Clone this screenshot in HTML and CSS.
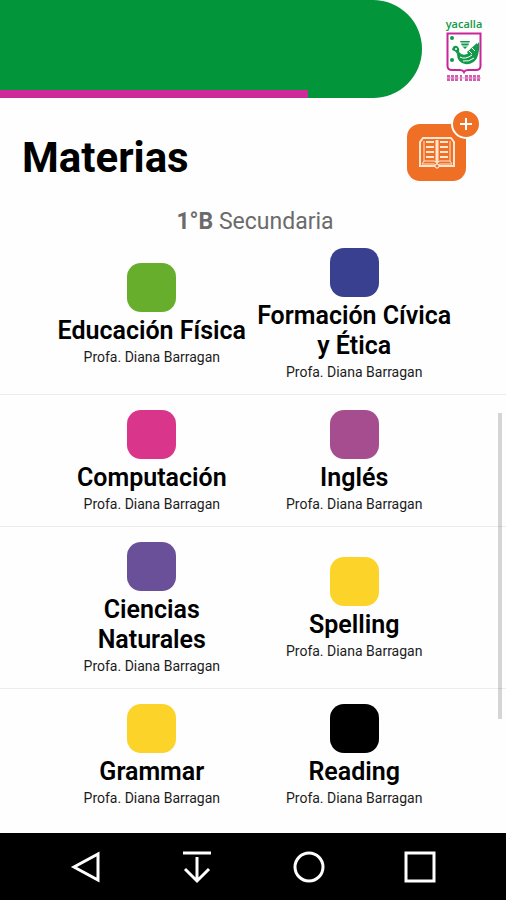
FILE: index.html
```
<!DOCTYPE html>
<html lang="es">
<head>
  <meta charset="UTF-8">
  <meta name="viewport" content="width=device-width, initial-scale=1.0">
  <title>Materias</title>
  <link rel="stylesheet" href="styles.css">
</head>
<body>

<header class="top">
  <div class="banner">
    <div class="banner-line"></div>
  </div>
  <div class="logo">
    <svg width="46" height="72" viewBox="-4 -6 46 72" role="img" aria-label="yacalla">
      <text x="19" y="10" text-anchor="middle" class="logo-text">yacalla</text>
      <!-- shield -->
      <path d="M2.500 15.500H35.500V48Q35.500 52 31 52H23Q20 52 19 54Q18 52 15 52H7Q2.500 52 2.500 48Z" fill="#fff" stroke="#c8259b" stroke-width="2"/>
      <!-- bird and flowers -->
      <g fill="#12994a">
        <path d="M7 32Q8 27 12 28Q15 30 14 34Q17 38 22 36Q29 33 34 24Q35 32 32 40Q28 47 20 46Q12 44 12 36Q11 33 7 32Z"/>
        <path d="M15 23H25L23 28L20 31L17 28Z"/>
        <circle cx="7" cy="20" r="2"/>
        <circle cx="7" cy="42" r="2"/>
        <path d="M22 34L32 25L33 27L24 37Z"/>
      </g>
      <g fill="none" stroke="#fff">
        <path d="M15 25H25M17 28H23M15 39Q20 42 27 37M18 43Q24 44 29 40M24 33L27 36M27 30L30 33"/>
      </g>
      <circle cx="11" cy="31" r="1" fill="#fff"/>
      <!-- motto -->
      <g fill="none" stroke="#cf5cae" stroke-width="6">
        <path d="M2 60H13" stroke-dasharray="3 1"/>
        <path d="M15 60H17"/>
        <path d="M20 60H36" stroke-dasharray="3 1"/>
      </g>
      <path d="M2 60H36" stroke="#e6a3d3" stroke-width="1"/>
    </svg>
  </div>
</header>

<main class="content">
  <div class="title-bar">
    <h1>Materias</h1>
    <button class="add-btn" type="button" aria-label="Agregar materia">
      <svg width="36" height="32" viewBox="0 0 36 32" fill="none" stroke="#ffe6d3" aria-hidden="true">
        <path d="M4 1H32L35 5V29H20Q18 32 16 29H1V5Z" stroke-width="2"/>
        <path d="M5 4V24L3 27H15Q18 27 18 30Q18 27 21 27H33L31 24V4M5 24H15Q18 24 18 27Q18 24 21 24H31" stroke-width="1"/>
        <path d="M18 3V26" stroke-width="3"/>
        <path d="M7 5H15M7 10H15M7 15H15M7 20H15M21 5H29M21 10H29M21 15H29M21 20H29" stroke-width="2"/>
        <circle cx="18" cy="29" r="2" fill="#ef6f25"/>
      </svg>
      <span class="badge">
        <svg width="12" height="12" viewBox="0 0 12 12" stroke="#fff" stroke-width="2" aria-hidden="true">
          <path d="M6 0V12M0 6H12"/>
        </svg>
      </span>
    </button>
  </div>

  <p class="group"><strong>1°B</strong> Secundaria</p>

  <div class="list">
    <div class="row">
      <a class="subject" href="#">
        <span class="color green"></span>
        <span class="name">Educación Física</span>
        <span class="teacher">Profa. Diana Barragan</span>
      </a>
      <a class="subject" href="#">
        <span class="color blue"></span>
        <span class="name">Formación Cívica y Ética</span>
        <span class="teacher">Profa. Diana Barragan</span>
      </a>
    </div>
    <div class="row">
      <a class="subject" href="#">
        <span class="color pink"></span>
        <span class="name">Computación</span>
        <span class="teacher">Profa. Diana Barragan</span>
      </a>
      <a class="subject" href="#">
        <span class="color plum"></span>
        <span class="name">Inglés</span>
        <span class="teacher">Profa. Diana Barragan</span>
      </a>
    </div>
    <div class="row">
      <a class="subject" href="#">
        <span class="color violet"></span>
        <span class="name">Ciencias Naturales</span>
        <span class="teacher">Profa. Diana Barragan</span>
      </a>
      <a class="subject" href="#">
        <span class="color yellow"></span>
        <span class="name">Spelling</span>
        <span class="teacher">Profa. Diana Barragan</span>
      </a>
    </div>
    <div class="row">
      <a class="subject" href="#">
        <span class="color yellow"></span>
        <span class="name">Grammar</span>
        <span class="teacher">Profa. Diana Barragan</span>
      </a>
      <a class="subject" href="#">
        <span class="color black"></span>
        <span class="name">Reading</span>
        <span class="teacher">Profa. Diana Barragan</span>
      </a>
    </div>
    <div class="scrollbar"></div>
  </div>
</main>

<nav class="navbar">
  <button type="button" aria-label="Atrás">
    <svg width="34" height="34" viewBox="0 0 34 34"><path d="M29 4V30L5 17Z"/></svg>
  </button>
  <button type="button" aria-label="Ocultar">
    <svg width="34" height="34" viewBox="0 0 34 34"><path d="M3 3H31M17 7V30M5 19L17 31L29 19"/></svg>
  </button>
  <button type="button" aria-label="Inicio">
    <svg width="34" height="34" viewBox="0 0 34 34"><circle cx="17" cy="17" r="14"/></svg>
  </button>
  <button type="button" aria-label="Recientes">
    <svg width="34" height="34" viewBox="0 0 34 34"><path d="M3 3H31V31H3Z"/></svg>
  </button>
</nav>

</body>
</html>
```
FILE: styles.css
```
* {
  box-sizing: border-box;
}

body {
  font-family: Roboto, sans-serif;
  margin: 0;
  background: #fefefe;
  color: #000;
  min-height: 100vh;
  display: flex;
  flex-direction: column;
}

button {
  border: none;
  padding: 0;
  background: none;
  cursor: pointer;
}

svg {
  display: block;
}

/* header */
.top {
  display: flex;
}

.banner {
  flex: 1;
  height: 98px;
  background: #029539;
  border-radius: 0 49px 49px 0;
  display: flex;
  align-items: flex-end;
}

.banner-line {
  width: 73%;
  height: 8px;
  background: #cf2898;
}

.logo {
  width: 84px;
  padding-top: 12px;
  display: flex;
  justify-content: center;
}

.logo-text {
  font-family: "Open Sans", sans-serif;
  font-size: 11px;
  font-weight: 600;
  fill: #12994a;
}

/* title */
.content {
  flex: 1;
  display: flex;
  flex-direction: column;
}

.title-bar {
  display: flex;
  justify-content: space-between;
  align-items: flex-start;
  padding: 26px 40px 0 22px;
}

h1 {
  margin: 0;
  padding-top: 6px;
  font-size: 42px;
  line-height: 56px;
  font-weight: 700;
}

.add-btn {
  position: relative;
  width: 59px;
  height: 57px;
  background: #ef6f25;
  border-radius: 13px;
  display: flex;
  justify-content: center;
  align-items: center;
}

.badge {
  position: absolute;
  top: -15px;
  right: -15px;
  width: 30px;
  height: 30px;
  border: 2px solid #fefefe;
  border-radius: 50%;
  background: #ef6f25;
  display: flex;
  justify-content: center;
  align-items: center;
}

.group {
  margin: 24px 0 0;
  padding-left: 4px;
  text-align: center;
  font-size: 23px;
  line-height: 23px;
  color: #6b6b6b;
}

/* subjects */
.list {
  flex: 1;
  position: relative;
}

.row {
  display: grid;
  grid-template-columns: 40% 40%;
  justify-content: center;
  align-items: center;
  padding: 15px 0 14px;
  border-bottom: 1px solid #ececec;
}

.row:nth-child(4) {
  border-bottom: none;
}

.subject {
  display: flex;
  flex-direction: column;
  align-items: center;
  text-align: center;
  text-decoration: none;
  color: #000;
}

.color {
  width: 49px;
  height: 49px;
  border-radius: 14px;
  margin-bottom: 4px;
}

.name {
  font-size: 25px;
  line-height: 30px;
  font-weight: 600;
}

.teacher {
  margin-top: 3px;
  font-size: 14px;
  line-height: 16px;
  color: #1c1c1c;
}

.green { background: #66ae2b; }
.blue { background: #3a4090; }
.pink { background: #d9368b; }
.plum { background: #a64d8f; }
.violet { background: #695098; }
.yellow { background: #fcd328; }
.black { background: #000; }

.scrollbar {
  position: absolute;
  top: 30%;
  right: 4px;
  width: 4px;
  height: 51%;
  background: rgba(0, 0, 0, 0.16);
}

/* android buttons */
.navbar {
  height: 67px;
  padding: 0 6%;
  background: #000;
  display: flex;
  justify-content: space-around;
  align-items: center;
}

.navbar svg {
  fill: none;
  stroke: #fff;
  stroke-width: 3;
}
```
